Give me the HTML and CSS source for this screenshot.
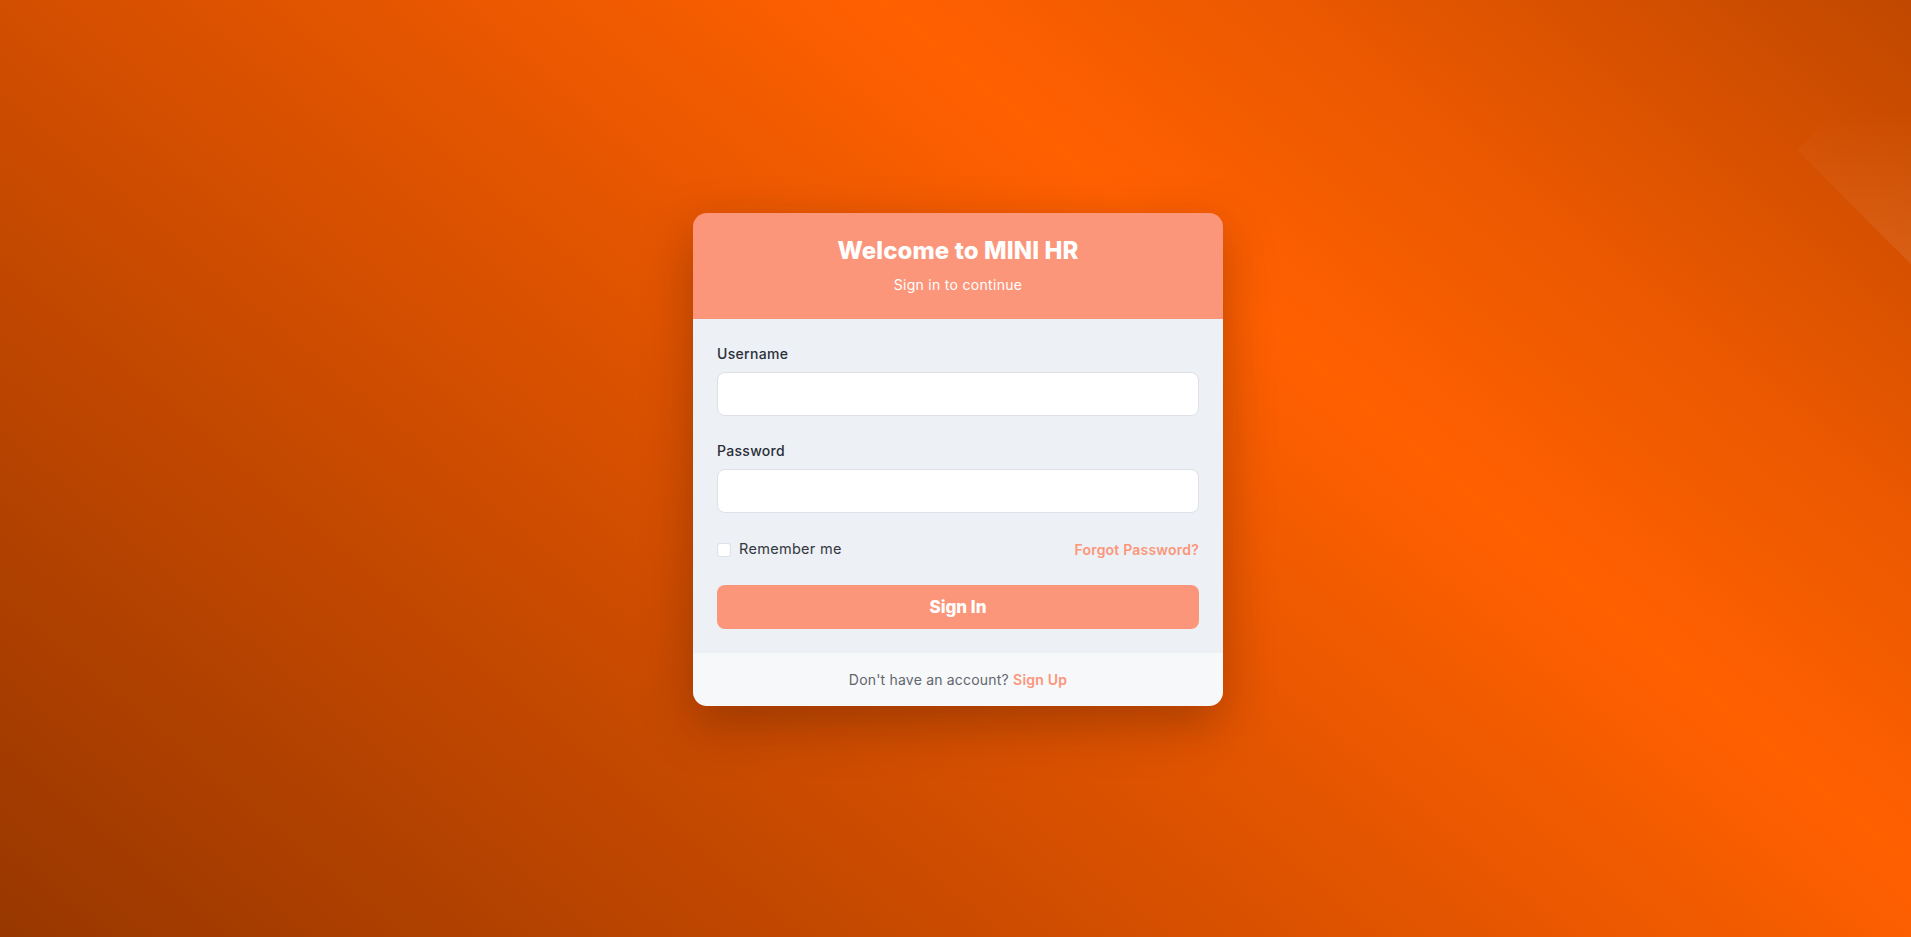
FILE: index.html
```html
<!DOCTYPE html>
<html lang="en">
<head>
<meta charset="utf-8">
<title>MINI HR - Sign In</title>
<link rel="stylesheet" href="styles.css">
</head>
<body>
<div class="page">
  <div class="deco"></div>
  <div class="card">
    <div class="card-header">
      <h1 class="title">Welcome to MINI HR</h1>
      <p class="subtitle">Sign in to continue</p>
    </div>
    <form class="card-body">
      <div class="field">
        <label class="label" for="username">Username</label>
        <input class="input" id="username" type="text">
      </div>
      <div class="field">
        <label class="label" for="password">Password</label>
        <input class="input" id="password" type="password">
      </div>
      <div class="row">
        <label class="remember"><span class="checkbox"></span><span>Remember me</span></label>
        <a class="link forgot" href="#">Forgot Password?</a>
      </div>
      <button class="btn" type="button">Sign In</button>
    </form>
    <div class="card-footer">
      Don't have an account? <a class="link signup" href="#">Sign Up</a>
    </div>
  </div>
</div>
</body>
</html>
```
FILE: styles.css
```css
* { box-sizing: border-box; }
html, body { margin: 0; padding: 0; height: 100%; }
body {
  font-family: Inter, "Noto Sans", sans-serif;
  overflow: hidden;
}
.page {
  position: relative;
  width: 100%;
  height: 100vh;
  overflow: hidden;
  display: flex;
  align-items: center;
  justify-content: center;
  background: linear-gradient(40deg, #983700 0%, #d24e00 37%, #ff6000 66%, #ea5800 80%, #c04800 100%);
}
.deco {
  position: absolute;
  top: 0;
  right: 0;
  width: 120px;
  height: 270px;
  clip-path: polygon(6px 150px, 120px 36px, 120px 264px);
  background: linear-gradient(to bottom, rgba(255,255,255,0) 110px, rgba(255,255,255,0.03) 165px, rgba(255,255,255,0.085) 264px);
  pointer-events: none;
}
.card {
  position: relative;
  width: 530px;
  border-radius: 14px;
  overflow: hidden;
  box-shadow: 0 18px 50px rgba(60, 20, 0, 0.35);
  margin-top: -18px;
  margin-left: 5px;
}
.card-header {
  background: #fc967a;
  padding: 24px;
  text-align: center;
  color: #fff;
}
.title {
  margin: 0;
  font-size: 24px;
  line-height: 1.2;
  font-weight: 800;
  letter-spacing: 0.1px;
}
.subtitle {
  margin: 8px 0 0;
  font-size: 14px;
  line-height: 21px;
  font-weight: 400;
  letter-spacing: 0.3px;
}
.card-body {
  background: #edf0f5;
  padding: 24px;
  margin: 0;
  display: flex;
  flex-direction: column;
  gap: 24px;
}
.field { display: flex; flex-direction: column; gap: 8px; }
.label {
  font-size: 14px;
  line-height: 21px;
  font-weight: 500;
  color: #2b2f38;
  letter-spacing: 0.3px;
}
.input {
  height: 44px;
  border: 1px solid #dde1e7;
  border-radius: 8px;
  background: #fff;
  font: inherit;
  padding: 0 12px;
}
.row {
  display: flex;
  align-items: center;
  justify-content: space-between;
  height: 24px;
}
.remember {
  display: flex;
  align-items: center;
  gap: 8px;
  font-size: 14.5px;
  color: #33373f;
  letter-spacing: 0.3px;
}
.checkbox {
  width: 14px;
  height: 14px;
  border: 1px solid #dde1e7;
  border-radius: 3px;
  background: #fff;
  margin-top: 2px;
}
.link {
  color: #fc967a;
  text-decoration: none;
  font-weight: 600;
}
.forgot { font-size: 14px; letter-spacing: 0.2px; margin-top: 2px; }
.btn {
  height: 44px;
  border: none;
  border-radius: 8px;
  background: #fc967a;
  color: #fff;
  font-family: inherit;
  font-size: 17px;
  font-weight: 800;
}
.card-footer {
  background: #f6f8fa;
  padding: 16px 24px;
  text-align: center;
  font-size: 14px;
  line-height: 21px;
  color: #62656c;
  letter-spacing: 0.2px;
}
.signup { font-size: 14px; }
```
